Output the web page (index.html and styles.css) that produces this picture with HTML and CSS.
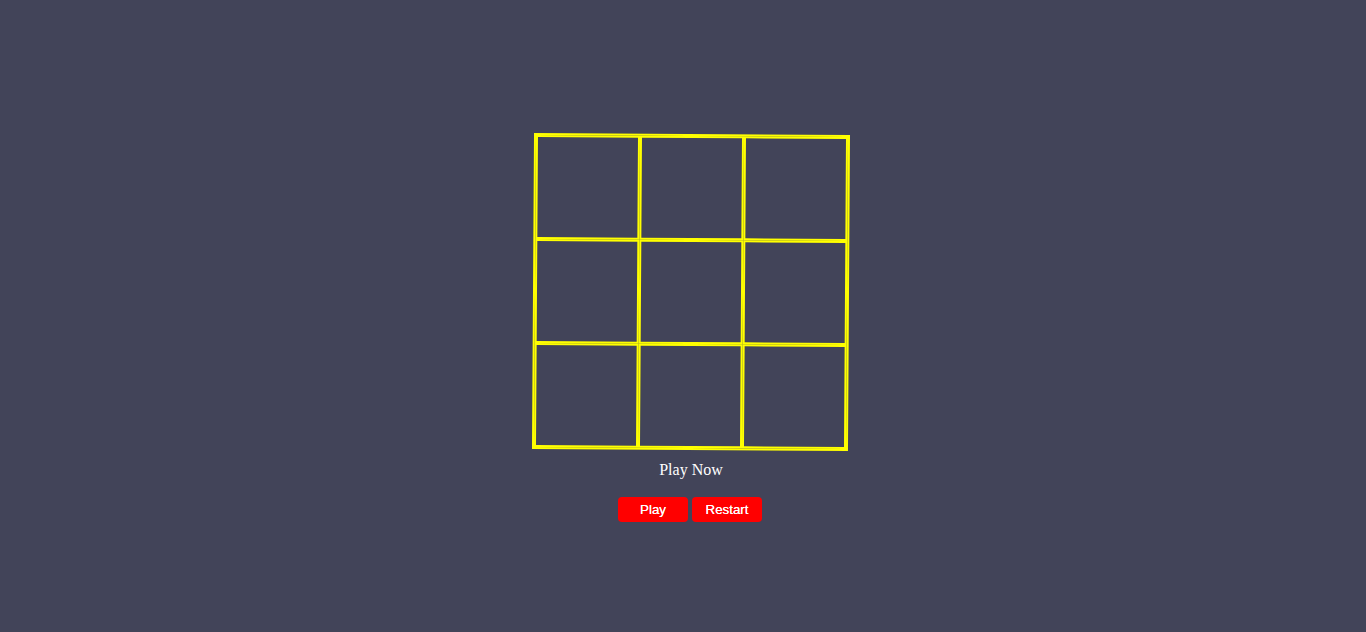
FILE: index.html
```html
<!DOCTYPE html>
<html>
<head>
<meta charset="utf-8">
<title>Tic Tac Toe</title>
<link rel="stylesheet" href="styles.css">
</head>
<body>
<div class="page">
  <div class="board">
    <div class="cell"></div><div class="cell"></div><div class="cell"></div>
    <div class="cell"></div><div class="cell"></div><div class="cell"></div>
    <div class="cell"></div><div class="cell"></div><div class="cell"></div>
  </div>
  <div class="status">Play Now</div>
  <div class="controls">
    <button class="btn">Play</button>
    <button class="btn">Restart</button>
  </div>
</div>
</body>
</html>
```
FILE: styles.css
```css
html, body {
  margin: 0;
  padding: 0;
  background: #424459;
  height: 100%;
  overflow: hidden;
}
.page {
  display: flex;
  flex-direction: column;
  align-items: center;
  padding: 134px 0 0 16px;
  font-family: "Liberation Serif", "Times New Roman", serif;
}
.board {
  display: grid;
  grid-template-columns: repeat(3, 104px);
  grid-template-rows: repeat(3, 104px);
  border: 2px solid #ffff00;
  transform: rotate(0.37deg);
}
.cell {
  border: 2px solid #ffff00;
}
.status {
  margin-top: 11px;
  font-size: 16px;
  line-height: 18px;
  color: #ffffff;
}
.controls {
  display: flex;
  gap: 4px;
  margin-top: 18px;
  margin-right: 2px;
}
.btn {
  width: 70px;
  height: 25px;
  border: none;
  border-radius: 4px;
  background: #ff0000;
  color: #ffffff;
  font-family: "Liberation Sans", Arial, sans-serif;
  font-size: 13.33px;
  padding: 0;
  text-shadow: 0 0 0.4px #ffffff;
}
```
